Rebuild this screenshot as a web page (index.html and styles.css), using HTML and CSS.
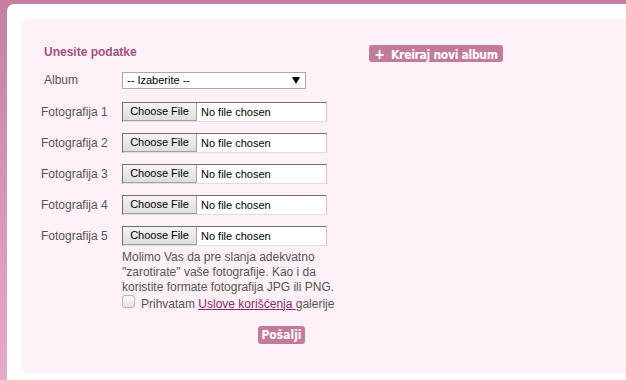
FILE: index.html
```html
<!DOCTYPE html>
<html lang="sr">
<head>
  <meta charset="UTF-8">
  <title>Galerija - Dodaj fotografije</title>
  <link rel="stylesheet" href="styles.css">
</head>
<body>
  <div class="page">
    <div class="content">
      <!-- Upload form -->
      <form class="upload-form">
        <h2 class="form-title">Unesite podatke</h2>

        <div class="row row-album">
          <span class="row-label label-album">Album</span>
          <div class="fake-select">
            <span>-- Izaberite --</span>
            <span class="select-arrow"></span>
          </div>
        </div>

        <div class="file-rows">
          <div class="row">
            <span class="row-label">Fotografija 1</span>
            <div class="fake-file"><span class="file-btn">Choose File</span><span class="file-name">No file chosen</span></div>
          </div>
          <div class="row">
            <span class="row-label">Fotografija 2</span>
            <div class="fake-file"><span class="file-btn">Choose File</span><span class="file-name">No file chosen</span></div>
          </div>
          <div class="row">
            <span class="row-label">Fotografija 3</span>
            <div class="fake-file"><span class="file-btn">Choose File</span><span class="file-name">No file chosen</span></div>
          </div>
          <div class="row">
            <span class="row-label">Fotografija 4</span>
            <div class="fake-file"><span class="file-btn">Choose File</span><span class="file-name">No file chosen</span></div>
          </div>
          <div class="row">
            <span class="row-label">Fotografija 5</span>
            <div class="fake-file"><span class="file-btn">Choose File</span><span class="file-name">No file chosen</span></div>
          </div>
        </div>

        <p class="note">Molimo Vas da pre slanja adekvatno "zarotirate" vaše fotografije. Kao i da koristite formate fotografija JPG ili PNG.</p>

        <label class="terms">
          <span class="fake-check"></span>
          <span>Prihvatam <a href="#" class="terms-link">Uslove korišćenja </a>galerije</span>
        </label>

        <div class="submit-row">
          <button type="button" class="pink-btn send-btn">Pošalji</button>
        </div>
      </form>

      <!-- New album -->
      <div class="side">
        <button type="button" class="pink-btn album-btn"><span class="plus">+</span> Kreiraj novi album</button>
      </div>
    </div>
  </div>
</body>
</html>
```

FILE: styles.css
```css
body {
  margin: 0;
  padding: 0;
  height: 380px;
  overflow: hidden;
  font-family: 'Liberation Sans', Arial, sans-serif;
  font-size: 12px;
  color: #555;
  background: linear-gradient(to bottom, #c47f9f 0%, #d596b6 50%, #e4abc9 100%);
}

.page {
  margin: 4px 0 0 7px;
  height: 376px;
  background-color: #fff;
  border-radius: 7px 0 0 0;
  padding: 15px 0 0 15px;
  box-sizing: border-box;
}

.content {
  height: 354px;
  background-color: #fef1f8;
  border-radius: 6px 0 0 6px;
  padding: 26px 0 0 19px;
  box-sizing: border-box;
  display: flex;
}

.upload-form {
  width: 287px;
}

.form-title {
  margin: 0 0 12px 3px;
  font-size: 12px;
  line-height: 15px;
  font-weight: bold;
  color: #a0517f;
}

.row {
  display: flex;
  align-items: center;
  height: 20px;
}

.row-album {
  height: 17px;
  margin-bottom: 13px;
}

.file-rows {
  display: flex;
  flex-direction: column;
  gap: 11px;
}

.row-label {
  width: 81px;
  flex-shrink: 0;
  line-height: 15px;
}

.label-album {
  padding-left: 3px;
  width: 78px;
}

.fake-select {
  width: 184px;
  height: 17px;
  box-sizing: border-box;
  border: 1px solid #a9a9a9;
  background-color: #fff;
  color: #000;
  font-size: 11px;
  line-height: 15px;
  padding: 0 0 0 4px;
  display: flex;
  justify-content: space-between;
  align-items: center;
}

.select-arrow {
  width: 0;
  height: 0;
  border-left: 4px solid transparent;
  border-right: 4px solid transparent;
  border-top: 7px solid #000;
  margin-right: 5px;
}

.fake-file {
  width: 205px;
  height: 20px;
  box-sizing: border-box;
  background-color: #fff;
  border-top: 1px solid #6f6f6f;
  border-left: 1px solid #6f6f6f;
  border-right: 1px solid #c9c9c9;
  border-bottom: 1px solid #dedede;
  display: flex;
  align-items: stretch;
  color: #000;
  font-size: 11px;
}

.file-btn {
  width: 74px;
  box-sizing: border-box;
  background: linear-gradient(to bottom, #f4f4f4, #dedede);
  border-right: 1px solid #a0a0a0;
  border-bottom: 1px solid #a0a0a0;
  text-align: center;
  line-height: 17px;
}

.file-name {
  padding-left: 4px;
  line-height: 18px;
}

.note {
  margin: 4px 0 0 81px;
  line-height: 15px;
  width: 225px;
}

.terms {
  display: flex;
  align-items: center;
  margin: 0 0 0 81px;
  height: 17px;
  white-space: nowrap;
}

.fake-check {
  width: 11px;
  height: 11px;
  flex-shrink: 0;
  border: 1px solid #b5b5b5;
  border-radius: 3px;
  background: linear-gradient(to bottom, #fcfcfc, #e4e4e4);
  margin-right: 6px;
  position: relative;
  top: -2px;
}

.terms-link {
  color: #8a2a6a;
  text-decoration: underline;
}

.submit-row {
  margin: 14px 0 0 217px;
}

.pink-btn {
  background-color: #c37b9c;
  color: #fff;
  border: none;
  border-radius: 3px;
  font-family: 'Liberation Sans Narrow', 'DejaVu Sans Condensed', 'Liberation Sans', sans-serif;
  font-weight: bold;
  font-size: 12px;
  padding: 0;
  cursor: pointer;
}

.send-btn {
  width: 47px;
  height: 18px;
}

.side {
  padding: 0 0 0 41px;
}

.album-btn {
  width: 134px;
  height: 17px;
  font-size: 12px;
  letter-spacing: -0.3px;
}

.plus {
  font-size: 14px;
  margin-right: 3px;
}
```
